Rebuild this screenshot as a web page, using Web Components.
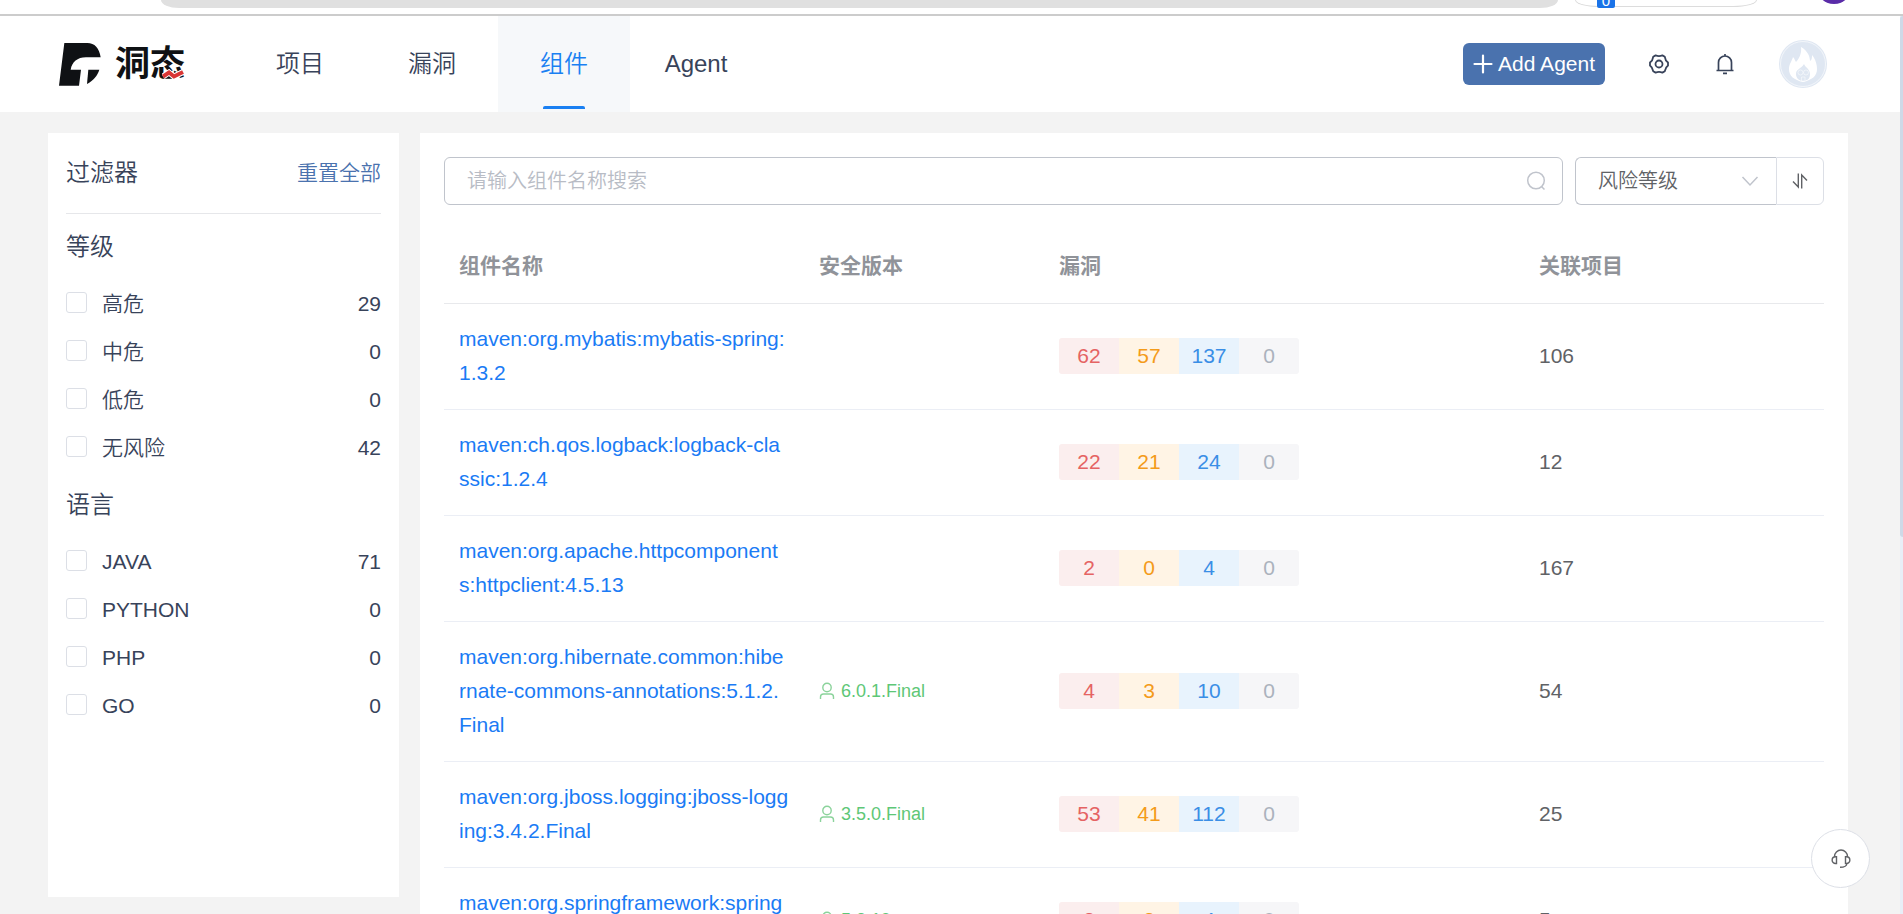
<!DOCTYPE html>
<html lang="zh-CN">
<head>
<meta charset="utf-8">
<title>洞态 - 组件</title>
<style>
  html, body { height: 100%; }
  body {
    margin: 0; overflow: hidden; background: #f3f3f3; color: #38435a;
    font-family: "Liberation Sans", "Noto Sans CJK SC", sans-serif; font-size: 21px;
  }
</style>
</head>
<body>
<iast-app>
  <window-strip slot="strip"></window-strip>
  <app-header slot="header">
    <nav-item>项目</nav-item>
    <nav-item>漏洞</nav-item>
    <nav-item active>组件</nav-item>
    <nav-item>Agent</nav-item>
  </app-header>
  <filter-panel slot="side">
    <filter-group heading="等级">
      <filter-option count="29">高危</filter-option>
      <filter-option count="0">中危</filter-option>
      <filter-option count="0">低危</filter-option>
      <filter-option count="42">无风险</filter-option>
    </filter-group>
    <filter-group heading="语言">
      <filter-option count="71">JAVA</filter-option>
      <filter-option count="0">PYTHON</filter-option>
      <filter-option count="0">PHP</filter-option>
      <filter-option count="0">GO</filter-option>
    </filter-group>
  </filter-panel>
  <content-panel>
    <search-bar></search-bar>
    <component-table></component-table>
  </content-panel>
</iast-app>
<support-button></support-button>
<page-scrollbar></page-scrollbar>

<script>
const define = (name, html, setup) => {
  const tpl = document.createElement('template');
  tpl.innerHTML = html;
  customElements.define(name, class extends HTMLElement {
    constructor() {
      super();
      this.attachShadow({ mode: 'open' }).append(tpl.content.cloneNode(true));
    }
    connectedCallback() { if (setup) setup(this, this.shadowRoot); }
  });
};

define('iast-app', `
<style>
  :host { display: flex; flex-direction: column; height: 100vh; overflow: hidden; }
  main { display: flex; gap: 21px; flex: 1; min-height: 0; padding: 21px 55px 0 48px; }
</style>
<slot name="strip"></slot><slot name="header"></slot>
<main><slot name="side"></slot><slot></slot></main>`);

define('window-strip', `
<style>
  :host { display: block; flex: none; height: 14px; background: #fff; border-bottom: 2px solid #ccc; overflow: hidden; }
  .row { display: flex; height: 14px; padding: 0 55px 0 161px; }
  .address { flex: 1; height: 8px; background: #e0e0e0; border-radius: 0 0 18px 18px / 0 0 8px 8px; }
  .pill { width: 182px; height: 7px; margin-left: 17px; padding-left: 21px; border: 1px solid #dcdcdc; border-top: 0;
    box-sizing: border-box; border-radius: 0 0 24px 24px / 0 0 7px 7px; }
  .badge { display: flex; align-items: flex-end; justify-content: center; width: 18px; height: 8px; background: #1a73e8;
    color: #fff; font-size: 15px; line-height: 14px; border-radius: 0 0 2px 2px; overflow: hidden; }
  .user { width: 28px; height: 4px; margin-left: 63px; overflow: hidden; display: flex; align-items: flex-end; justify-content: center; }
  .user i { flex: none; width: 36px; height: 36px; border-radius: 50%; background: #5a2ca8; }
</style>
<div class="row"><div class="address"></div><div class="pill"><div class="badge">0</div></div><div class="user"><i></i></div></div>`);

define('app-header', `
<style>
  :host { display: flex; flex: none; height: 96px; box-sizing: border-box; padding: 0 76px 0 59px; background: #fff; align-items: center; }
  .logo { display: flex; align-items: center; gap: 14px; width: 175px; color: #0f1114; text-decoration: none; }
  .word { position: relative; font-size: 35px; line-height: 44px; font-weight: 700; }
  .word svg { position: absolute; left: 47px; top: 27px; }
  nav { display: flex; align-self: stretch; flex: 1; }
  .tools { display: flex; align-items: center; gap: 42px; }
  button { padding: 0; border: 0; background: none; color: #38435a; font: inherit; cursor: pointer; }
  button svg { display: block; }
  .add { display: flex; align-items: center; gap: 5px; height: 42px; padding: 0 10px; border-radius: 6px; background: #4a72ae; color: #fff; line-height: 24px; }
</style>
<a class="logo" href="#" aria-label="洞态">
  <svg width="42" height="43" viewBox="27 23 126 129" fill="#0f1114">
    <path d="M43 23H112C134 23 148 38 152 66H108C82 66 66 80 62 103H93L87 151H27Z"/>
    <path d="M115 103H148C142 122 129 136 111 146Z"/>
  </svg>
  <span class="word">洞态<svg width="24" height="12" viewBox="0 0 24 12" fill="none"><path d="M1 7.500L7 3.500L12 7.500L21 3" stroke="#fff" stroke-width="6"/><path d="M1 7.500L7 3.500L12 7.500L21 3" stroke="#d93636" stroke-width="4"/></svg></span>
</a>
<nav><slot></slot></nav>
<div class="tools">
  <button class="add"><svg width="20" height="20" viewBox="0 0 20 20" stroke="#fff" stroke-width="2.200" stroke-linecap="round"><path d="M10 1.500V18.500M1.500 10H18.500"/></svg>Add Agent</button>
  <button aria-label="设置"><svg width="24" height="24" viewBox="0 0 24 24" fill="none" stroke="currentColor" stroke-width="1.800" stroke-linejoin="round"><path d="M21 13.500V10.500Q18.200 8.400 17.800 4.800L15.400 3.400Q12 4.800 8.600 3.400L6.200 4.800Q5.800 8.400 3 10.500V13.500Q5.800 15.600 6.200 19.200L8.600 20.600Q12 19.200 15.400 20.600L17.800 19.200Q18.200 15.600 21 13.500Z"/><circle cx="12" cy="12" r="3.500"/></svg></button>
  <button aria-label="通知"><svg width="24" height="24" viewBox="0 0 24 24" fill="none" stroke="currentColor" stroke-width="1.700"><path d="M5.500 18.500V10.500A6.500 6.500 0 0 1 18.500 10.500V18.500M3.500 18.500H20.500M12 2V4M10 21.300H14"/></svg></button>
  <button aria-label="用户"><svg width="48" height="48" viewBox="0 0 48 48"><circle cx="24" cy="24" r="24" fill="#dfe7f2"/><circle cx="24" cy="24" r="22.500" fill="none" stroke="#fff" stroke-width=".6"/><path fill="#fff" d="M22 7C29 11 31 17 31 21C33 20 33 17 33 15C37 20 38 25 38 29C38 36 33 40 24 42C15 40 10 36 10 29C10 24 13 21 14 17C16 19 16 21 17 22C20 19 23 13 22 7Z"/><path fill="#dfe7f2" d="M25 24C26 27 31 29 31 34C31 39 28 41 24 41C20 41 17 38 17 34C17 29 22 29 25 24Z"/><g fill="none" stroke="#fff" stroke-width=".5"><circle cx="21.500" cy="32.500" r="2.500"/><circle cx="27" cy="32.500" r="2.500"/><path d="M22.500 37H26V41H22.500Z"/></g></svg></button>
</div>`);

define('nav-item', `
<style>
  :host { display: block; width: 132px; }
  a { display: flex; height: 100%; align-items: center; justify-content: center; position: relative; color: inherit;
    font-size: 24px; line-height: 32px; text-decoration: none; font-weight: 350; }
  :host([active]) a { background: #f6f8fa; color: #1a80f2; }
  :host([active]) a::after { content: ""; position: absolute; left: 45px; right: 45px; bottom: 3px; height: 3px; border-radius: 2px 2px 0 0; background: #1a80f2; }
</style>
<a href="#"><slot></slot></a>`);

define('filter-panel', `
<style>
  :host { display: block; flex: none; width: 351px; box-sizing: border-box; padding: 0 18px; margin-bottom: 17px; background: #fff; font-weight: 350; }
  header { display: flex; align-items: center; justify-content: space-between; height: 80px; border-bottom: 1px solid #e6e7ea; }
  h2 { margin: 0; font-size: 24px; line-height: 32px; font-weight: 350; }
  a { color: #4a72ae; text-decoration: none; line-height: 28px; }
</style>
<header><h2>过滤器</h2><a href="#">重置全部</a></header>
<slot></slot>`);

define('filter-group', `
<style>
  :host { display: block; }
  h3 { margin: 0; font-size: 24px; line-height: 66px; font-weight: 350; }
</style>
<h3></h3><slot></slot>`, (el, root) => {
  root.querySelector('h3').textContent = el.getAttribute('heading');
});

define('filter-option', `
<style>
  :host { display: block; }
  label { display: flex; align-items: center; height: 48px; gap: 15px; line-height: 28px; cursor: pointer; }
  input { appearance: none; flex: none; width: 21px; height: 21px; margin: 0 0 3px; border: 1px solid #dcdfe6; border-radius: 3px; background: #fff; }
  input:checked { background: #4a72ae; }
  .name { flex: 1; }
</style>
<label><input type="checkbox"><span class="name"><slot></slot></span><span class="count"></span></label>`, (el, root) => {
  root.querySelector('.count').textContent = el.getAttribute('count');
});

define('content-panel', `
<style>
  :host { display: block; flex: 1; min-width: 0; box-sizing: border-box; padding: 24px 24px 0; background: #fff; overflow: hidden; }
</style>
<slot></slot>`);

define('search-bar', `
<style>
  :host { display: flex; gap: 12px; height: 48px; margin-bottom: 24px; }
  .field { display: flex; flex: 1; align-items: center; box-sizing: border-box; padding: 0 16px 0 22px; border: 1px solid #c0c4cc; border-radius: 6px; }
  input { flex: 1; min-width: 0; padding: 0; border: 0; outline: 0; background: none; font: inherit; font-size: 20px; line-height: 28px; font-weight: 350; color: #606266; }
  input::placeholder { color: #b8bcc5; opacity: 1; }
  .sort { display: flex; width: 249px; }
  .choice { display: flex; align-items: center; flex: 1; box-sizing: border-box; border: 1px solid #c0c4cc; border-right: 0; border-radius: 6px 0 0 6px; padding-right: 17px; }
  select { appearance: none; flex: 1; min-width: 0; border: 0; outline: 0; padding: 0 0 0 22px; background: none; color: #606266; font: inherit; font-size: 20px; line-height: 28px; font-weight: 350; }
  button { display: flex; align-items: center; justify-content: center; box-sizing: border-box; width: 48px; padding: 0; border: 1px solid #dcdfe6; border-radius: 0 6px 6px 0; background: #fff; color: #606266; }
  svg { flex: none; }
</style>
<div class="field">
  <input type="text" placeholder="请输入组件名称搜索" aria-label="请输入组件名称搜索">
  <svg width="20" height="20" viewBox="0 0 20 20" fill="none" stroke="#c0c4cc" stroke-width="1.500"><circle cx="10" cy="9.500" r="8.300"/><path d="M15.500 15.500L18.500 18.500"/></svg>
</div>
<div class="sort">
  <div class="choice">
    <select aria-label="排序"><option>风险等级</option><option>关联项目</option></select>
    <svg width="18" height="12" viewBox="0 0 18 12" fill="none" stroke="#c0c4cc" stroke-width="1.500"><path d="M1.500 2L9 10L16.500 2"/></svg>
  </div>
  <button aria-label="切换排序"><svg width="18" height="18" viewBox="0 0 18 18" fill="none" stroke="currentColor" stroke-width="1.400"><path d="M2 9.500L7.300 15V1.500M10.700 16.500V3L16 8.500"/></svg></button>
</div>`);

const rows = [
  ['maven:org.mybatis:mybatis-spring:1.3.2', '', [62, 57, 137, 0], 106],
  ['maven:ch.qos.logback:logback-classic:1.2.4', '', [22, 21, 24, 0], 12],
  ['maven:org.apache.httpcomponents:httpclient:4.5.13', '', [2, 0, 4, 0], 167],
  ['maven:org.hibernate.common:hibernate-commons-annotations:5.1.2.Final', '6.0.1.Final', [4, 3, 10, 0], 54],
  ['maven:org.jboss.logging:jboss-logging:3.4.2.Final', '3.5.0.Final', [53, 41, 112, 0], 25],
  ['maven:org.springframework:spring-core:5.3.9', '5.3.19', [3, 3, 4, 0], 5]
];
const person = `<svg width="16" height="18" viewBox="0 0 16 18" fill="none" stroke="#8bd39b" stroke-width="1.400"><circle cx="8" cy="5.500" r="4.200"/><path d="M1.500 17V15Q1.500 12 4.500 12H11.500Q14.500 12 14.500 15V17"/></svg>`;

define('component-table', `
<style>
  :host { display: block; }
  table { width: 100%; border-collapse: separate; border-spacing: 0; table-layout: fixed; }
  th, td { padding: 18px 15px 19px; border-bottom: 1px solid #ebeef5; text-align: left; line-height: 34px; word-break: break-all; }
  th { padding: 20px 15px; color: #909399; font-weight: 700; border-color: #e8e9ec; }
  td { color: #606266; vertical-align: middle; }
  col:nth-child(1) { width: 360px; } col:nth-child(2) { width: 240px; } col:nth-child(4) { width: 300px; }
  a { color: #1a7bf5; text-decoration: none; }
  .safe { display: flex; align-items: center; gap: 6px; color: #5ec777; font-size: 18px; line-height: 24px; }
  .tags { display: grid; grid-template-columns: repeat(4, 60px); width: 240px; border-radius: 3px; overflow: hidden; text-align: center; }
  .tags span { height: 36px; line-height: 35px; }
  .high { background: #fbeeee; color: #e56363; } .medium { background: #fff4e5; color: #f49b1a; }
  .low { background: #e8f3fd; color: #3a8ee6; } .none { background: #f6f6f8; color: #abb2bd; }
</style>
<table>
  <colgroup><col><col><col><col></colgroup>
  <thead><tr><th>组件名称</th><th>安全版本</th><th>漏洞</th><th>关联项目</th></tr></thead>
  <tbody></tbody>
</table>`, (el, root) => {
  const levels = ['high', 'medium', 'low', 'none'];
  root.querySelector('tbody').innerHTML = rows.map(([name, safe, counts, projects]) => `<tr>
    <td><a href="#">${name}</a></td>
    <td>${safe ? `<div class="safe">${person}${safe}</div>` : ''}</td>
    <td><div class="tags">${counts.map((n, i) => `<span class="${levels[i]}">${n}</span>`).join('')}</div></td>
    <td>${projects}</td></tr>`).join('');
});

define('support-button', `
<style>
  :host { position: fixed; right: 33px; bottom: 26px; }
  button { display: flex; align-items: center; justify-content: center; box-sizing: border-box; width: 59px; height: 59px; padding: 0; border: 1px solid #dcdfe6; border-radius: 50%; background: #fff; color: #606266; }
</style>
<button aria-label="联系客服"><svg width="20" height="20" viewBox="0 0 20 20" fill="none" stroke="currentColor" stroke-width="1.400"><path d="M3.500 8V7.500A6.500 6.500 0 0 1 16.500 7.500V8M5.500 7.800V14.500H4.500A3.300 3.300 0 0 1 4.500 7.800ZM14.500 7.800V14.500H15.500A3.300 3.300 0 0 0 15.500 7.800ZM16 14.500Q15.500 18.300 9 18.300"/></svg></button>`);

define('page-scrollbar', `
<style>
  :host { position: fixed; top: 16px; right: 0; bottom: 0; width: 3px; background: #e8eef7; }
  div { height: 58%; background: #ced9e7; border-radius: 3px 0 0 3px; }
</style>
<div></div>`);
</script>
</body>
</html>
